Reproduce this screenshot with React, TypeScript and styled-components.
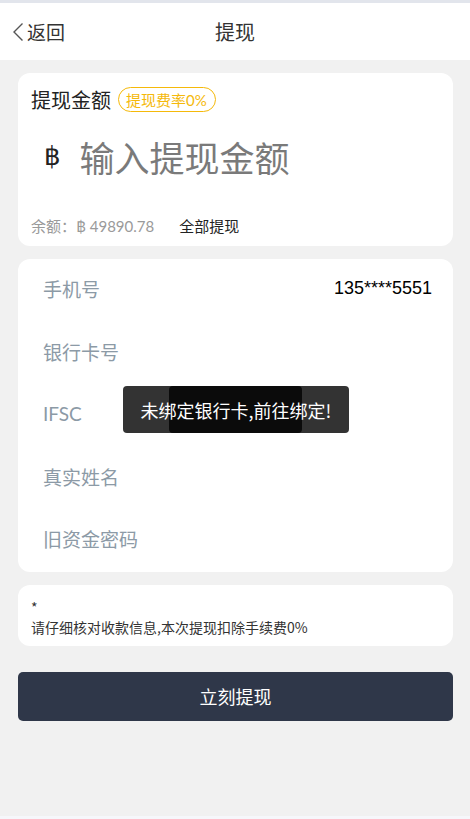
import React from "react";
import styled, { createGlobalStyle } from "styled-components";

const GlobalStyle = createGlobalStyle`
  html, body { margin: 0; padding: 0; }
  body {
    background: #f1f1f1;
    font-family: "Lato", "Noto Sans CJK SC", sans-serif;
    color: #333;
  }
`;

const Page = styled.div`
  min-height: 819px;
  display: flex;
  flex-direction: column;
  border-top: 3px solid #e2e5ec;
  box-sizing: border-box;
  position: relative;
`;

const Header = styled.header`
  height: 57px;
  background: #fff;
  display: grid;
  grid-template-columns: 1fr auto 1fr;
  align-items: center;
  padding: 0 12px;
`;

const Back = styled.div`
  display: flex;
  align-items: center;
  gap: 3px;
  font-size: 19px;
  color: #333;
  font-family: "Noto Sans CJK SC", sans-serif;
`;

const Title = styled.div`
  font-size: 20px;
  color: #333;
  font-family: "Noto Sans CJK SC", sans-serif;
`;

const Content = styled.main`
  flex: 1;
  padding: 13px 17px 0 18px;
  display: flex;
  flex-direction: column;
  gap: 13px;
`;

const Card = styled.section`
  background: #fff;
  border-radius: 12px;
`;

const AmountCard = styled(Card)`
  height: 173px;
  box-sizing: border-box;
  padding: 14px 13px 11px;
  display: flex;
  flex-direction: column;
`;

const TitleRow = styled.div`
  display: flex;
  align-items: center;
  gap: 7px;
  height: 25px;
`;

const CardTitle = styled.span`
  font-size: 20px;
  color: #222;
  font-family: "Noto Sans CJK SC", sans-serif;
`;

const Badge = styled.span`
  border: 1px solid #f5b90a;
  color: #f5b90a;
  border-radius: 13px;
  height: 23px;
  padding: 0 8px 0 7px;
  font-size: 15px;
  display: flex;
  align-items: center;
  font-family: "Lato", "Noto Sans CJK SC", sans-serif;
`;

const AmountRow = styled.div`
  display: flex;
  align-items: center;
  height: 62px;
  margin-top: 13px;
  padding-left: 13px;
  gap: 19px;
`;

const Currency = styled.span`
  font-size: 26px;
  color: #222;
  font-family: "DejaVu Sans", sans-serif;
`;

const AmountInput = styled.input`
  border: none;
  outline: none;
  font-size: 35px;
  font-family: "Noto Sans CJK SC", sans-serif;
  width: 340px;
  padding: 0;
  background: transparent;
  &::placeholder { color: #7a7a7a; }
`;

const BalanceRow = styled.div`
  margin-top: auto;
  display: flex;
  align-items: center;
  gap: 25px;
  font-size: 15px;
  height: 20px;
`;

const Balance = styled.span`
  color: #9a9a9a;
  font-family: "Lato", "Noto Sans CJK SC", sans-serif;
`;

const AllLink = styled.span`
  color: #222;
  font-family: "Noto Sans CJK SC", sans-serif;
`;

const InfoCard = styled(Card)`
  display: flex;
  flex-direction: column;
  padding: 0 21px 0 25px;
`;

const Row = styled.div`
  height: 62.5px;
  box-sizing: border-box;
  padding-bottom: 3px;
  display: flex;
  align-items: center;
  justify-content: space-between;
`;

const Label = styled.span`
  font-size: 19px;
  color: #8c9aa6;
  font-family: "Lato", "Noto Sans CJK SC", sans-serif;
`;

const Value = styled.span`
  font-size: 18px;
  color: #000;
  font-family: "Liberation Sans", sans-serif;
`;

const NoteCard = styled(Card)`
  padding: 12px 13px 9px;
  font-size: 14px;
  line-height: 20px;
  color: #333;
  font-family: "Noto Sans CJK SC", sans-serif;
`;

const SubmitButton = styled.button`
  margin-top: 13px;
  height: 49px;
  border: none;
  border-radius: 5px;
  background: #2f3749;
  color: #fff;
  font-size: 18px;
  font-family: "Noto Sans CJK SC", sans-serif;
`;

const BottomStrip = styled.div`
  height: 3px;
  background: #f6f7fb;
`;

const Toast = styled.div`
  position: fixed;
  left: 123px;
  top: 386px;
  width: 226px;
  height: 47px;
  border-radius: 4px;
  background: #333;
  display: flex;
  align-items: center;
  justify-content: center;
  overflow: hidden;
`;

const ToastShade = styled.div`
  position: absolute;
  left: 46px;
  top: 0;
  width: 133px;
  height: 47px;
  border-radius: 4px;
  background: #0b0b0b;
`;

const ToastText = styled.span`
  position: relative;
  color: #fff;
  font-size: 18px;
  font-family: "Noto Sans CJK SC", sans-serif;
`;

const fields = [
  { label: "手机号", value: "135****5551" },
  { label: "银行卡号", value: "" },
  { label: "IFSC", value: "" },
  { label: "真实姓名", value: "" },
  { label: "旧资金密码", value: "" },
];

export default function App() {
  return (
    <>
      <GlobalStyle />
      <Page>
        <Header>
          <Back>
            <svg width="12" height="20" viewBox="0 0 12 20">
              <path d="M10.5 1.5 L2 10 L10.5 18.5" fill="none" stroke="#555" strokeWidth="1.4" />
            </svg>
            返回
          </Back>
          <Title>提现</Title>
          <span />
        </Header>
        <Content>
          <AmountCard>
            <TitleRow>
              <CardTitle>提现金额</CardTitle>
              <Badge>提现费率0%</Badge>
            </TitleRow>
            <AmountRow>
              <Currency>฿</Currency>
              <AmountInput placeholder="输入提现金额" />
            </AmountRow>
            <BalanceRow>
              <Balance>余额：฿ 49890.78</Balance>
              <AllLink>全部提现</AllLink>
            </BalanceRow>
          </AmountCard>
          <InfoCard>
            {fields.map((f) => (
              <Row key={f.label}>
                <Label>{f.label}</Label>
                {f.value && <Value>{f.value}</Value>}
              </Row>
            ))}
          </InfoCard>
          <NoteCard>
            <div>*</div>
            <div>请仔细核对收款信息,本次提现扣除手续费0%</div>
          </NoteCard>
          <SubmitButton>立刻提现</SubmitButton>
        </Content>
        <BottomStrip />
        <Toast>
          <ToastShade />
          <ToastText>未绑定银行卡,前往绑定!</ToastText>
        </Toast>
      </Page>
    </>
  );
}
